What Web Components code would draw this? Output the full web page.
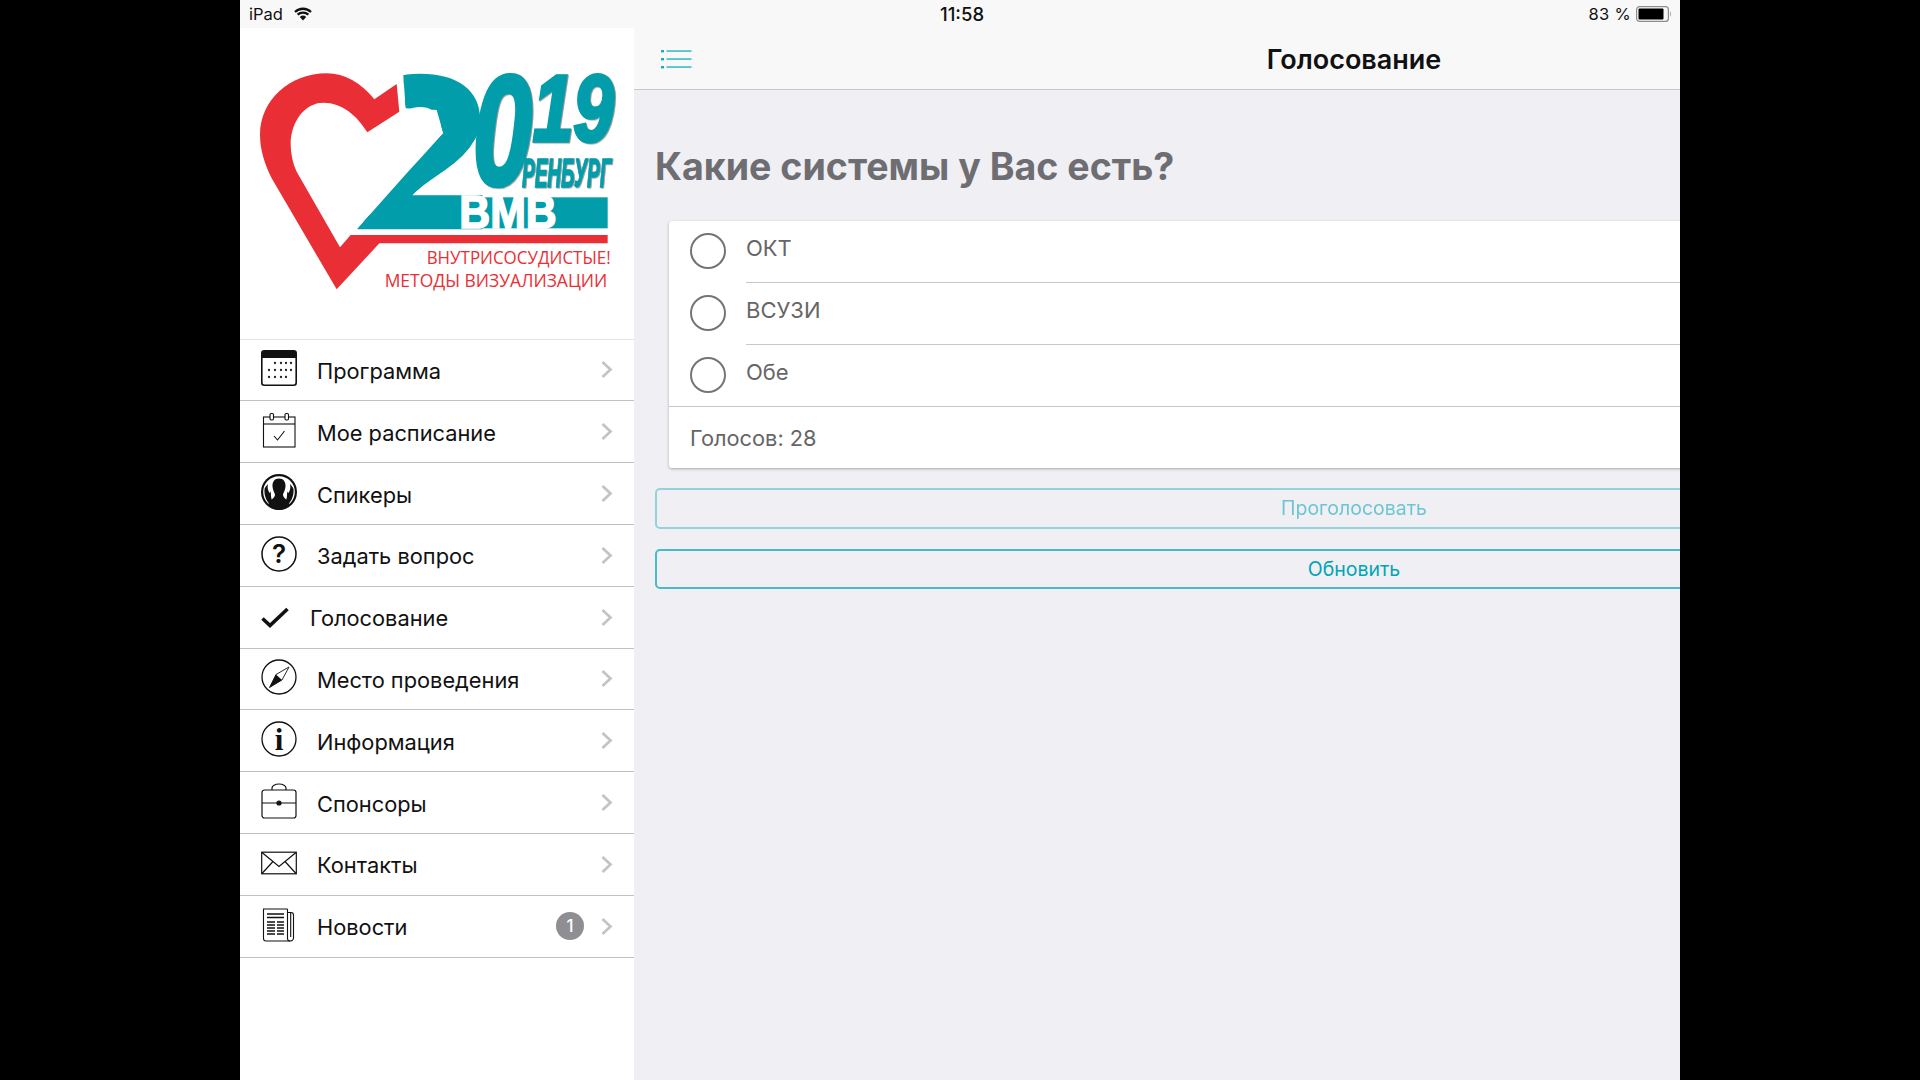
<!DOCTYPE html>
<html lang="ru"><head><meta charset="utf-8"><title>Голосование</title>
<style>html,body{margin:0;background:#000;font-family:Inter,"Noto Sans",sans-serif}</style></head>
<body>
<app-shell>
  <status-bar slot="status"></status-bar>
  <side-menu slot="side">
    <logo-mark slot="logo"></logo-mark>
    <menu-row icon="calendar">Программа</menu-row>
    <menu-row icon="schedule">Мое расписание</menu-row>
    <menu-row icon="speakers">Спикеры</menu-row>
    <menu-row icon="question">Задать вопрос</menu-row>
    <menu-row icon="check" narrow>Голосование</menu-row>
    <menu-row icon="compass">Место проведения</menu-row>
    <menu-row icon="info">Информация</menu-row>
    <menu-row icon="case">Спонсоры</menu-row>
    <menu-row icon="mail">Контакты</menu-row>
    <menu-row icon="news" badge="1">Новости</menu-row>
  </side-menu>
  <detail-pane slot="main">
    <nav-bar>Голосование</nav-bar>
    <poll-view heading="Какие системы у Вас есть?">
      <poll-card votes="Голосов: 28">
        <poll-option>ОКТ</poll-option>
        <poll-option>ВСУЗИ</poll-option>
        <poll-option last>Обе</poll-option>
      </poll-card>
      <outline-button disabled>Проголосовать</outline-button>
      <outline-button>Обновить</outline-button>
    </poll-view>
  </detail-pane>
</app-shell>
<script>
const dots=[[14,13],[20,13],[25,13],[30,13],[8,20],[14,20],[20,20],[25,20],[30,20],[8,27],[14,27],[20,27],[25,27]].map(d=>`<circle cx="${d[0]}" cy="${d[1]}" r="1.150"/>`).join('');
const ICONS = {
calendar:`<svg width="36" height="36" viewBox="0 0 36 36"><rect x=".8" y=".8" width="34.4" height="34.4" rx="2.5" fill="#fff" stroke="#111" stroke-width="1.6"/><path d="M1 3a2 2 0 0 1 2-2h30a2 2 0 0 1 2 2v5H1z" fill="#111"/><g fill="#222">${dots}</g></svg>`,
schedule:`<svg width="36" height="36" viewBox="0 0 36 36" fill="none" stroke="#111" stroke-width="1.1"><rect x="2.500" y="5" width="31.500" height="30"/><rect x="9" y="1.500" width="3.500" height="6.500" rx="1.200" fill="#fff"/><rect x="24" y="1.500" width="3.500" height="6.500" rx="1.200" fill="#fff"/><path d="M2.500 12h31.500"/><path d="M13 24l3.500 4 7-9"/></svg>`,
speakers:`<svg width="36" height="36" viewBox="0 0 36 36"><circle cx="18" cy="18" r="18" fill="#111"/><circle cx="18" cy="18" r="15.800" fill="#fff"/><path d="M3.500 15C3 21 5 27 10 31.500l4.500 1C10.500 27.500 9.500 22.500 10 17c-1 3-1.500 2-2.500 0-1-2.500-1-4-.5-7-2 2-3 3.500-3.500 5zM32.500 15C33 21 31 27 26 31.500l-4.500 1c4-5 5-10 4.500-15.500 1 3 1.500 2 2.500 0 1-2.500 1-4 .5-7 2 2 3 3.500 3.500 5z" fill="#111"/><path d="M18 4.500c4.500 0 6.800 3.500 6.500 8-.2 3-1.800 6-2.500 8 0 3.500 4 4.500 6.500 9-.2 2-5 6.500-10.500 6.500S7.700 31.500 7.500 29.500C10 25 14 24 14 20.500c-.7-2-2.300-5-2.500-8-.3-4.500 2-8 6.500-8z" fill="#111"/></svg>`,
question:`<svg width="36" height="36" viewBox="0 0 36 36"><circle cx="18" cy="18" r="17" fill="none" stroke="#111" stroke-width="1.500"/><text x="18" y="27" text-anchor="middle" font-family="Inter" font-weight="600" font-size="26" fill="#111">?</text></svg>`,
check:`<svg width="36" height="36" viewBox="0 0 36 36" fill="none"><path d="M1.500 20.500l7.500 7L26.500 11" stroke="#111" stroke-width="3.600"/></svg>`,
compass:`<svg width="36" height="36" viewBox="0 0 36 36"><circle cx="18" cy="18" r="17" fill="none" stroke="#111" stroke-width="1.300"/><path d="M8.500 28.500L15 15.500 28 8 21 21z" fill="#fff" stroke="#111" stroke-width=".9"/><path d="M8.500 28.500L15 15.500 21 21z" fill="#111"/></svg>`,
info:`<svg width="36" height="36" viewBox="0 0 36 36"><circle cx="18" cy="18" r="17" fill="none" stroke="#111" stroke-width="1.300"/><text x="18" y="29" text-anchor="middle" font-family="Liberation Serif" font-weight="700" font-size="31" fill="#111">i</text></svg>`,
case:`<svg width="36" height="36" viewBox="0 0 36 36" fill="none" stroke="#111" stroke-width="1.200"><rect x="1" y="7" width="34" height="28" rx="2.500"/><path d="M1 20h34"/><path d="M11 7V5c0-2 3-4 7-4s7 2 7 4v2"/><circle cx="18" cy="20" r="2" fill="#111"/></svg>`,
mail:`<svg width="36" height="36" viewBox="0 0 36 36" fill="none" stroke="#111" stroke-width="1.200"><rect x=".7" y="7.200" width="34.600" height="21.600"/><path d="M1 7.500l17 14 17-14M1 28.500l11-12M35 28.500l-11-12"/></svg>`,
news:`<svg width="36" height="36" viewBox="0 0 36 36" fill="none" stroke="#111" stroke-width="1.100"><path d="M26.500 2H2.500v29.500c0 1.500 1 2.500 2.500 2.500h24c1.500 0 3.500-1 3.500-3V8c0-1.500-1-2.500-2.500-2.500h-3.500"/><path d="M26.500 2v29.500c0 1.500 1 2.500 2.500 2.500M29.700 6v24"/><path d="M6 7h17M6 10.500h17" stroke-width="1.300"/><path d="M6 15h8M16 15h7M6 18h8M16 18h7M6 21h8M16 21h7M6 24h8M16 24h7M6 27h8M16 27h7" stroke-width="1.500"/></svg>`
};
function def(name, css, html){
  customElements.define(name, class extends HTMLElement{
    connectedCallback(){
      if(this.shadowRoot) return;
      const r=this.attachShadow({mode:'open'});
      r.innerHTML=`<style>${css}</style>`+(typeof html==='function'?html(this):html);
    }
  });
}
def('app-shell',`:host{display:block;width:1440px;height:1080px;margin:0 auto;overflow:hidden;background:#f8f8f8;color:#111}
.body{display:flex;height:1052px}
.side{display:block;flex:0 0 394px}.main{display:block;flex:1;min-width:0;overflow:hidden}`,
`<slot name="status"></slot><div class="body"><div class="side"><slot name="side"></slot></div><div class="main"><slot name="main"></slot></div></div>`);

def('status-bar',`:host{display:flex;align-items:center;height:28px;background:#f8f8f8;font-size:16.500px;color:#111;padding:0 8px 0 9px;position:relative}
.l{display:flex;align-items:center;gap:10px}.t{position:absolute;left:700px;font-weight:500;font-size:18.500px}
.r{margin-left:auto;display:flex;align-items:center;gap:5px;font-size:16.500px;letter-spacing:.3px}
svg{display:block}`,
`<div class="l"><span>iPad</span><svg width="20" height="14" viewBox="0 0 20 14"><path d="M10 13.500L6.800 9.900a4.700 4.700 0 0 1 6.400 0z" fill="#111"/><path d="M4.600 7.700a7.800 7.800 0 0 1 10.800 0M2 5a11.500 11.500 0 0 1 16 0" fill="none" stroke="#111" stroke-width="2.300"/></svg></div>
<div class="t">11:58</div>
<div class="r"><span>83 %</span><svg width="36" height="16" viewBox="0 0 36 16"><rect x=".6" y=".6" width="31.800" height="14.800" rx="3" fill="none" stroke="#8e8e8e" stroke-width="1.200"/><rect x="2.500" y="2.500" width="25" height="11" rx="1" fill="#000"/><path d="M34 5.500c1 .5 1 4.500 0 5z" fill="#8e8e8e"/></svg></div>`);

def('side-menu',`:host{display:block;height:1052px;background:#fff}
.list{display:grid;grid-auto-rows:61.800px;border-top:1px solid #e4e4e6}`,
`<slot name="logo"></slot><div class="list"><slot></slot></div>`);

def('logo-mark',`:host{display:block;height:310.600px}svg{display:block;overflow:visible}
text{font-family:"Liberation Sans",sans-serif}
.sh{filter:drop-shadow(3px 2px 0 #9a9a9a)}
.thin{font-family:"Open Sans",sans-serif;font-weight:400}`,
`<svg width="394" height="311" viewBox="0 84 1182 933">
<defs><clipPath id="two"><path d="M488 200H800V700H340L500 520 610 400 590 330 497 325Z"/></clipPath></defs>
<path d="M470 252L403 298C365 250 315 220 260 220C150 220 60 300 60 405C60 450 75 495 95 535L290 868L418 730H1103V705H332L300 742L170 515C158 490 152 460 152 432C152 365 195 308 250 308C305 308 350 345 382 397L478 335Z" fill="#e92f35"/>
<g clip-path="url(#two)"><text x="346" y="672" font-size="622" font-weight="700" fill="#029daa" stroke="#029daa" stroke-width="32" textLength="392" lengthAdjust="spacingAndGlyphs">2</text></g>
<rect x="500" y="592" width="603" height="93" fill="#029daa"/>
<g class="sh" fill="#029daa" stroke="#029daa" font-weight="700" font-style="italic">
<text x="698" y="553" font-size="468" stroke-width="14" textLength="178" lengthAdjust="spacingAndGlyphs">0</text>
<text x="878" y="424" font-size="282" stroke-width="11" textLength="244" lengthAdjust="spacingAndGlyphs">19</text>
<text x="846" y="562" font-size="124" stroke-width="4" textLength="268" lengthAdjust="spacingAndGlyphs">РЕНБУРГ</text>
</g>
<text x="658" y="685" font-size="136" font-weight="700" fill="#fff" stroke="#fff" stroke-width="5" textLength="292" lengthAdjust="spacingAndGlyphs">ВМВ</text>
<text class="thin" x="560" y="793" font-size="52" fill="#e92f35" textLength="552" lengthAdjust="spacingAndGlyphs">ВНУТРИСОСУДИСТЫЕ!</text>
<text class="thin" x="434" y="862" font-size="52" fill="#e92f35" textLength="668" lengthAdjust="spacingAndGlyphs">МЕТОДЫ ВИЗУАЛИЗАЦИИ</text>
</svg>`);

def('menu-row',`:host{display:flex;align-items:center;box-sizing:border-box;height:61.800px;border-bottom:1px solid #c0c0c5;padding:0 21px 0 21px;background:#fff;font-size:21.800px;color:#111;position:relative}
.i{width:36px;height:36px;flex:none;margin-top:-3px}.i svg{display:block}
.t{margin-left:20px;padding-top:2px}
:host([narrow]) .t{margin-left:13px}
.b{margin-left:auto;width:28px;height:28px;border-radius:50%;background:#8e8e93;color:#fff;font-size:17px;font-weight:500;display:flex;align-items:center;justify-content:center}
.c{flex:none;margin-left:auto}.b + .c{margin-left:17px}svg.c{display:block}`,
h=>`<div class="i">${ICONS[h.getAttribute('icon')]||''}</div><div class="t"><slot></slot></div>${h.hasAttribute('badge')?`<div class="b">${h.getAttribute('badge')}</div>`:''}<svg class="c" width="12" height="17" viewBox="0 0 12 17"><path d="M1.500 1l8 7.500-8 7.500" fill="none" stroke="#c4c4c8" stroke-width="2.800"/></svg>`);

def('detail-pane',`:host{display:block;width:1440px;height:1052px;background:#efeff4}`,`<slot></slot>`);

def('nav-bar',`:host{display:flex;align-items:center;justify-content:center;box-sizing:border-box;height:62px;padding-top:2px;background:#f8f8f8;border-bottom:1px solid #c8c7cc;font-size:27px;font-weight:600;color:#111;position:relative}
svg{position:absolute;left:27px;top:21px}`,
`<svg width="31" height="20" viewBox="0 0 31 20" fill="#14aebd"><rect y="1" width="3" height="2.400"/><rect y="9" width="3" height="2.400"/><rect y="17" width="3" height="2.400"/><rect x="5.500" y="1.400" width="25" height="1.300"/><rect x="5.500" y="9.400" width="25" height="1.300"/><rect x="5.500" y="17.400" width="25" height="1.300"/></svg><slot></slot>`);

def('poll-view',`:host{display:block;padding:54px 21px 0}
h1{margin:0 0 31px;font-size:37.550px;line-height:46px;font-weight:700;color:#6d6d72;letter-spacing:0}
::slotted(outline-button){margin-top:20px}`,
h=>`<h1>${h.getAttribute('heading')}</h1><slot></slot>`);

def('poll-card',`:host{display:block;margin-left:14px;background:#fff;border-radius:3px;box-shadow:0 1px 3px rgba(0,0,0,.3);height:247px;overflow:hidden;color:#666}
.v{box-sizing:border-box;height:62px;border-top:1px solid #c8c7cc;padding:0 0 0 21px;font-size:21.800px;line-height:62px}`,
h=>`<slot></slot><div class="v">${h.getAttribute('votes')}</div>`);

def('poll-option',`:host{display:flex;height:62px;padding-left:21px;color:#666;font-size:22px}
:host([last]){height:61px}
.r{box-sizing:border-box;width:36px;height:36px;border:2px solid #757575;border-radius:50%;margin-top:12px;flex:none}
.t{margin-left:20px;flex:1;border-bottom:1px solid #c8c7cc;line-height:54px}
:host([last]) .t{border-bottom:0}`,
`<div class="r"></div><div class="t"><slot></slot></div>`);

def('outline-button',`:host{display:flex;align-items:center;justify-content:center;box-sizing:border-box;height:40.500px;border:2px solid rgba(0,165,181,.7);border-radius:5px;color:#00a5b5;font-size:19.500px}
:host([disabled]){opacity:.55}`,`<slot></slot>`);
</script>
</body></html>
